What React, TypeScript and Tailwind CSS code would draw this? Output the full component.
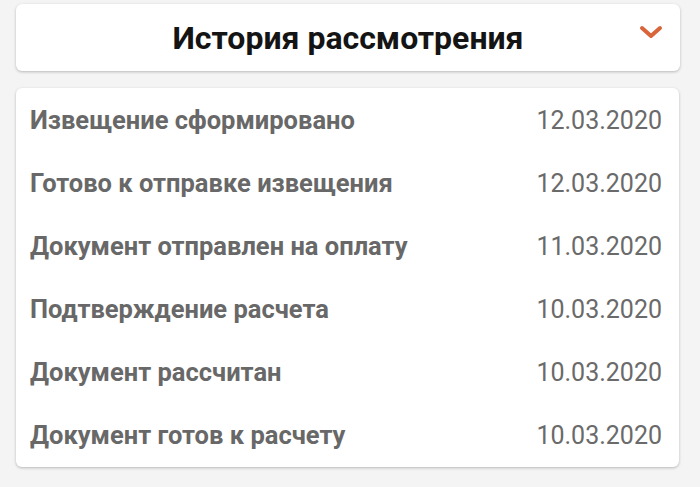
const rows = [
  { label: "Извещение сформировано", date: "12.03.2020" },
  { label: "Готово к отправке извещения", date: "12.03.2020" },
  { label: "Документ отправлен на оплату", date: "11.03.2020" },
  { label: "Подтверждение расчета", date: "10.03.2020" },
  { label: "Документ рассчитан", date: "10.03.2020" },
  { label: "Документ готов к расчету", date: "10.03.2020" },
];

function Chevron() {
  return (
    <svg width="24" height="14" viewBox="0 0 24 14" fill="none">
      <path
        d="M3 3 L12 11 L21 3"
        stroke="#d9653b"
        strokeWidth="4"
        strokeLinecap="round"
        strokeLinejoin="round"
      />
    </svg>
  );
}

export default function App() {
  return (
    <div
      className="min-h-[487px] w-[700px] bg-[#f4f4f4] px-4 pt-1"
      style={{ fontFamily: "Roboto, 'Noto Sans', sans-serif" }}
    >
      {/* Header */}
      <div className="relative flex h-[67px] w-[664px] items-center justify-center rounded-md bg-white shadow-[0_1px_3px_rgba(0,0,0,0.25)]">
        <h1 className="text-[32px] font-bold leading-none text-[#141414]">История рассмотрения</h1>
        <div className="absolute right-[17px] top-[21px]">
          <Chevron />
        </div>
      </div>

      {/* History list */}
      <div className="mt-[17px] w-[663px] rounded-md bg-white pl-[14px] pr-[17px] pt-[1px] pb-0 shadow-[0_1px_3px_rgba(0,0,0,0.25)]">
        {rows.map((r) => (
          <div key={r.label} className="flex h-[63px] items-center justify-between leading-none">
            <span className="text-[25.5px] font-bold text-[#686868]">{r.label}</span>
            <span className="text-[25px] text-[#6a6a6a]">{r.date}</span>
          </div>
        ))}
      </div>
    </div>
  );
}
